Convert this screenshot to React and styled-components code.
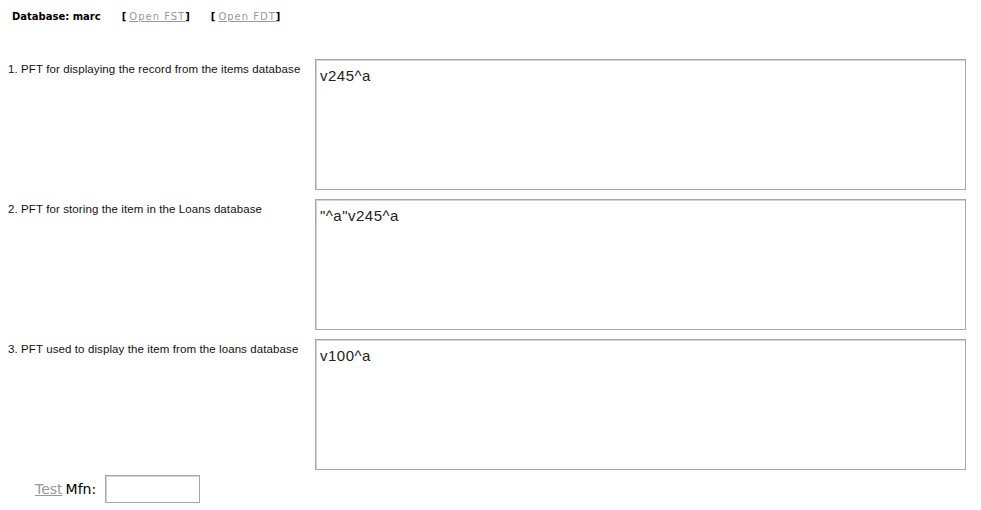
import React from 'react';
import styled, { createGlobalStyle } from 'styled-components';

const GlobalStyle = createGlobalStyle`
  body {
    margin: 8px;
    background: #fff;
    color: #000;
    font-family: "Liberation Sans", Arial, sans-serif;
  }
`;

const Header = styled.div`
  display: flex;
  align-items: baseline;
  gap: 21px;
  padding: 3px 0 0 4px;
  font-family: "DejaVu Sans", Tahoma, sans-serif;
  font-size: 10px;
  font-weight: bold;
  height: 12px;
  line-height: 12px;
`;

const Bracket = styled.span`
  font-weight: bold;
`;

const GreyLink = styled.a`
  color: #999;
  font-weight: normal;
  letter-spacing: 1px;
  text-decoration: underline;
  cursor: pointer;
  margin-left: 3px;
`;

const Fields = styled.div`
  display: grid;
  grid-template-columns: 307px 651px;
  row-gap: 9px;
  margin-top: 36px;
`;

const Label = styled.label`
  font-size: 11.5px;
  letter-spacing: 0.1px;
  line-height: 14px;
  padding-top: 3px;
  white-space: nowrap;
  color: #111;
`;

const Area = styled.textarea`
  box-sizing: border-box;
  width: 651px;
  height: 131px;
  margin: 0;
  padding: 7px 4px;
  border: 1px solid #a7a7a7;
  box-shadow: inset 1px 1px 0 #d4d4d4;
  font-family: "Liberation Sans", Arial, sans-serif;
  font-size: 15px;
  letter-spacing: 0.5px;
  color: #222;
  resize: none;
  outline: none;
`;

const Footer = styled.div`
  display: flex;
  align-items: center;
  gap: 3px;
  margin-top: 5px;
  padding-left: 27px;
  font-family: "DejaVu Sans", Tahoma, sans-serif;
  font-size: 14px;
`;

const TestLink = styled.a`
  color: #999;
  text-decoration: underline;
  cursor: pointer;
`;

const MfnInput = styled.input`
  box-sizing: border-box;
  width: 95px;
  height: 28px;
  margin: 0 0 0 6px;
  border: 1px solid #a7a7a7;
  box-shadow: inset 1px 1px 0 #d4d4d4;
  outline: none;
`;

const fields = [
  { label: '1. PFT for displaying the record from the items database', value: 'v245^a' },
  { label: '2. PFT for storing the item in the Loans database', value: '"^a"v245^a' },
  { label: '3. PFT used to display the item from the loans database', value: 'v100^a' },
];

export default function App() {
  return (
    <>
      <GlobalStyle />
      <Header>
        <span>Database: marc</span>
        <Bracket>[<GreyLink>Open FST</GreyLink>]</Bracket>
        <Bracket>[<GreyLink>Open FDT</GreyLink>]</Bracket>
      </Header>
      <Fields>
        {fields.map((f) => (
          <React.Fragment key={f.label}>
            <Label>{f.label}</Label>
            <Area defaultValue={f.value} />
          </React.Fragment>
        ))}
      </Fields>
      <Footer>
        <TestLink>Test</TestLink>
        <span>Mfn:</span>
        <MfnInput />
      </Footer>
    </>
  );
}
